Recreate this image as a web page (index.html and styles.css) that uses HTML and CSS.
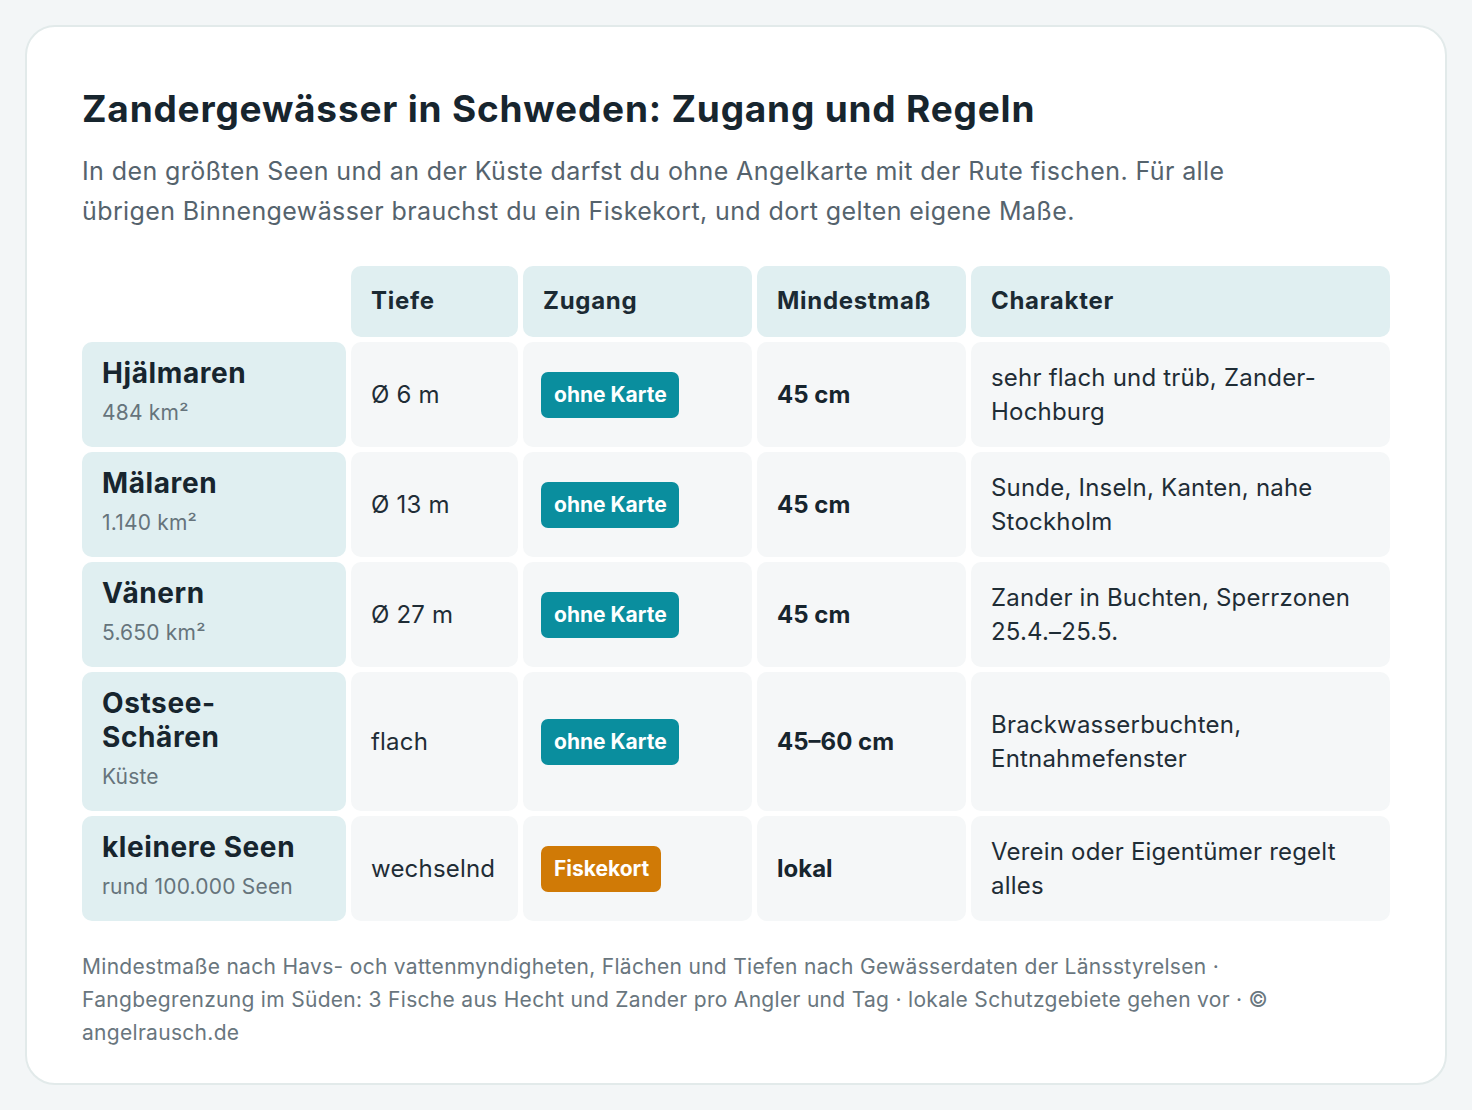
FILE: index.html
```html
<!DOCTYPE html>
<html lang="de">
<head>
<meta charset="utf-8">
<title>Zandergewässer in Schweden</title>
<link rel="stylesheet" href="styles.css">
</head>
<body>
<main class="card">
  <h1 class="title">Zandergewässer in Schweden: Zugang und Regeln</h1>
  <p class="lead">In den größten Seen und an der Küste darfst du ohne Angelkarte mit der Rute fischen. Für alle übrigen Binnengewässer brauchst du ein Fiskekort, und dort gelten eigene Maße.</p>

  <div class="grid">
    <div class="corner"></div>
    <div class="head">Tiefe</div>
    <div class="head">Zugang</div>
    <div class="head">Mindestmaß</div>
    <div class="head">Charakter</div>

    <div class="rowhead"><div class="name">Hjälmaren</div><div class="sub">484 km²</div></div>
    <div class="cell">Ø 6 m</div>
    <div class="cell"><span class="badge teal">ohne Karte</span></div>
    <div class="cell strong">45 cm</div>
    <div class="cell">sehr flach und trüb, Zander-Hochburg</div>

    <div class="rowhead"><div class="name">Mälaren</div><div class="sub">1.140 km²</div></div>
    <div class="cell">Ø 13 m</div>
    <div class="cell"><span class="badge teal">ohne Karte</span></div>
    <div class="cell strong">45 cm</div>
    <div class="cell">Sunde, Inseln, Kanten, nahe Stockholm</div>

    <div class="rowhead"><div class="name">Vänern</div><div class="sub">5.650 km²</div></div>
    <div class="cell">Ø 27 m</div>
    <div class="cell"><span class="badge teal">ohne Karte</span></div>
    <div class="cell strong">45 cm</div>
    <div class="cell">Zander in Buchten, Sperrzonen 25.4.–25.5.</div>

    <div class="rowhead"><div class="name">Ostsee-<br>Schären</div><div class="sub">Küste</div></div>
    <div class="cell">flach</div>
    <div class="cell"><span class="badge teal">ohne Karte</span></div>
    <div class="cell strong">45–60 cm</div>
    <div class="cell">Brackwasserbuchten, Entnahmefenster</div>

    <div class="rowhead"><div class="name">kleinere Seen</div><div class="sub">rund 100.000 Seen</div></div>
    <div class="cell">wechselnd</div>
    <div class="cell"><span class="badge orange">Fiskekort</span></div>
    <div class="cell strong">lokal</div>
    <div class="cell">Verein oder Eigentümer regelt alles</div>
  </div>

  <p class="foot">Mindestmaße nach Havs- och vattenmyndigheten, Flächen und Tiefen nach Gewässerdaten der Länsstyrelsen · Fangbegrenzung im Süden: 3 Fische aus Hecht und Zander pro Angler und Tag · lokale Schutzgebiete gehen vor · © angelrausch.de</p>
</main>
</body>
</html>
```

FILE: styles.css
```css
html, body {
  margin: 0;
  padding: 0;
}
body {
  background: #f3f6f7;
  padding: 25px;
  font-family: Inter, "Open Sans", "Liberation Sans", sans-serif;
  color: #1b2a33;
}
.card {
  background: #ffffff;
  border: 2px solid #e2eaea;
  border-radius: 30px;
  padding: 56px 55px 36px 55px;
  box-sizing: border-box;
  height: 1060px;
}
.title {
  margin: 0;
  font-size: 37px;
  line-height: 52px;
  font-weight: 700;
  color: #17252e;
  letter-spacing: 0.8px;
}
.lead {
  margin: 16px 0 0 0;
  font-size: 25px;
  line-height: 40px;
  color: #55636d;
  letter-spacing: 0.4px;
  max-width: 1180px;
}
.grid {
  margin-top: 35px;
  display: grid;
  grid-template-columns: 264px 167px 229px 209px 1fr;
  gap: 5px;
}
.head {
  background: #e0eff1;
  border-radius: 10px;
  padding: 18px 20px 19px;
  font-size: 24px;
  line-height: 34px;
  font-weight: 700;
  color: #1b2a33;
  letter-spacing: 0.7px;
}
.rowhead {
  background: #e0eff1;
  border-radius: 10px;
  padding: 14px 20px 20px;
  display: flex;
  flex-direction: column;
  justify-content: center;
}
.name {
  font-size: 28px;
  line-height: 34px;
  font-weight: 700;
  color: #17252e;
  letter-spacing: 0.6px;
}
.sub {
  margin-top: 8px;
  font-size: 21px;
  line-height: 29px;
  color: #66747c;
  letter-spacing: 0.2px;
}
.cell {
  background: #f5f7f8;
  border-radius: 10px;
  padding: 18.5px 20px;
  display: flex;
  align-items: center;
  font-size: 24px;
  line-height: 34px;
  color: #1f2d36;
  letter-spacing: 0.2px;
}
.strong {
  font-weight: 700;
  color: #17252e;
  letter-spacing: 0;
}
.badge {
  display: inline-block;
  margin-left: -2px;
  color: #ffffff;
  font-weight: 700;
  font-size: 21px;
  line-height: 46px;
  padding: 0 12px 0 13px;
  border-radius: 7px;
  letter-spacing: 0;
}
.teal { background: #0a8e9e; }
.orange { background: #d07a06; }
.foot {
  margin: 29px 0 0 0;
  font-size: 21px;
  line-height: 33px;
  color: #69767e;
  letter-spacing: 0.3px;
  max-width: 1200px;
}
```
